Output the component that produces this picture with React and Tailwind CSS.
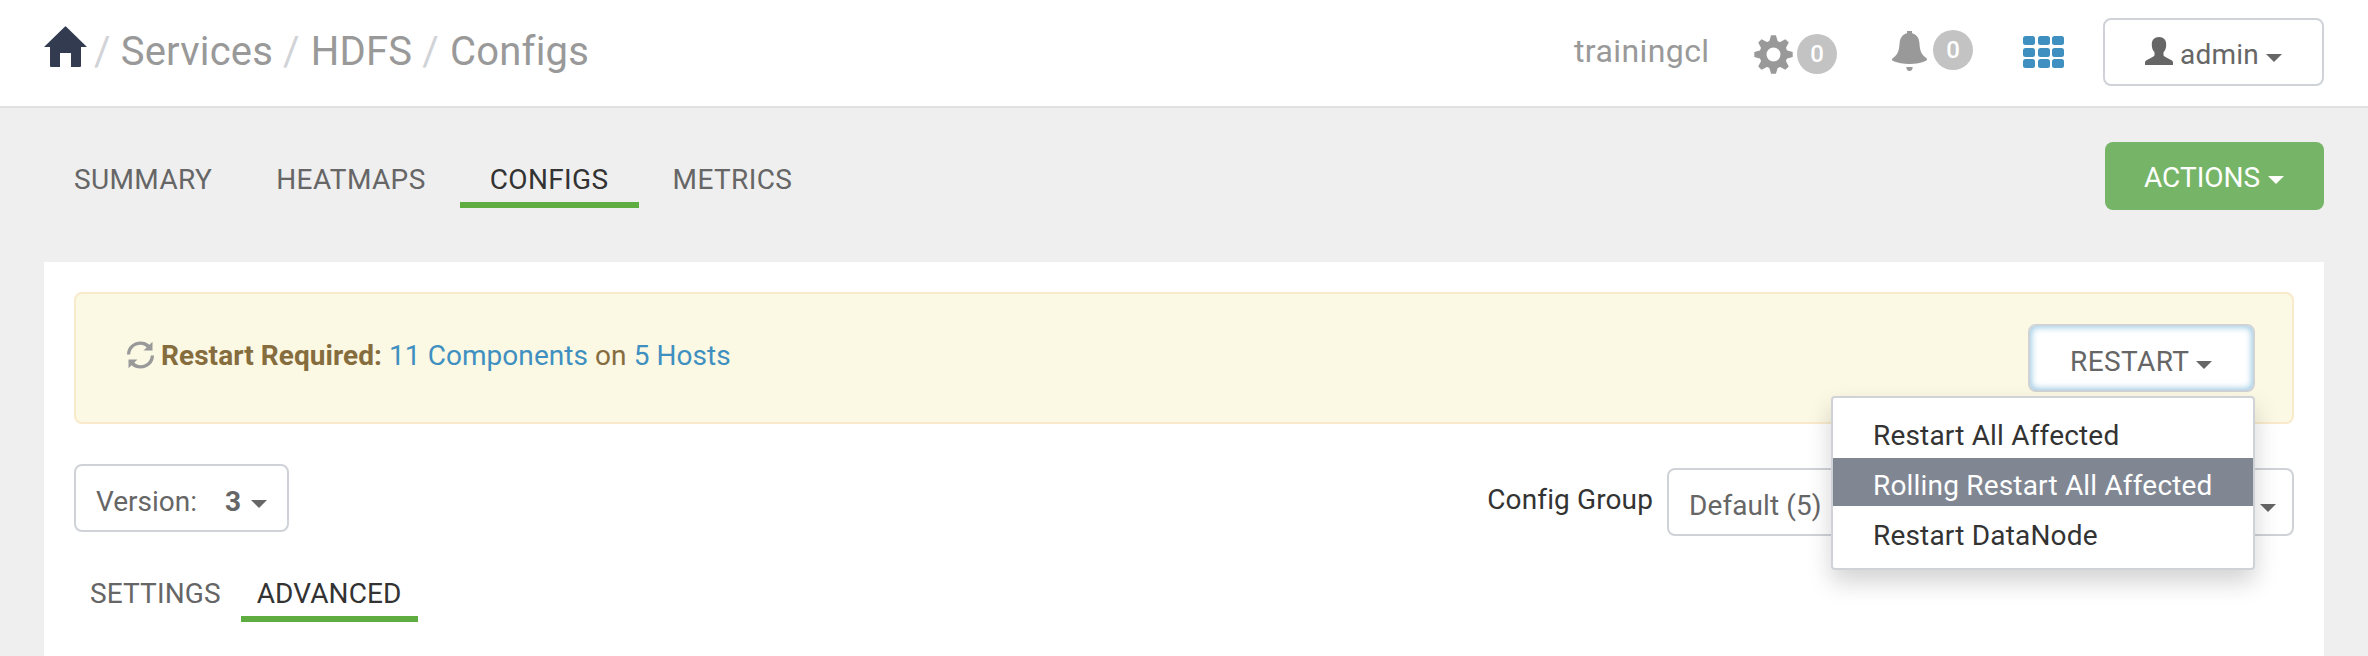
import React from "react";

const Caret = ({ className = "" }) => (
  <span
    className={`inline-block h-0 w-0 shrink-0 border-x-8 border-t-8 border-x-transparent border-t-current ${className}`}
  />
);

const HomeIcon = () => (
  <svg className="block h-[41px] w-[43px] shrink-0" viewBox="0 0 43 41" fill="#323b4f">
    <path d="M20.800.7a1 1 0 0 1 1.400 0L43 21h-6v19a1 1 0 0 1-1 1h-9V27H16v14H7a1 1 0 0 1-1-1V21H0z" />
  </svg>
);

const TEETH = [0, 45, 90, 135, 180, 225, 270, 315];

const CogIcon = () => (
  <svg className="block h-[39px] w-[39px] shrink-0" viewBox="-19.5 -19.5 39 39">
    <g fill="#999">
      {TEETH.map((a) => (
        <path key={a} transform={`rotate(${a})`} d="M-2.4-19.2h4.8L4.6-12h-9.2z" />
      ))}
    </g>
    <circle r="10.5" fill="none" stroke="#999" strokeWidth="7" />
  </svg>
);

const BellIcon = () => (
  <svg className="block h-[40px] w-[35px] shrink-0" viewBox="0 0 35 40" fill="#999">
    <path d="M15 0h5v2.200c4.500 1 7 4.500 7.400 9.500.5 8 1.600 11.500 7.200 15.500.8 1 .4 2-.6 2.500C29 32 24 33 17.500 33S6 32 1 30c-1-.5-1.400-1.500-.6-2.500C6 23.500 7.100 20 7.600 12 8 7 10.500 3.200 15 2.200z" />
    <path d="M14.300 36h6.400c0 2-1 4-3.200 4s-3.200-2-3.200-4z" />
  </svg>
);

const GridIcon = () => (
  <span className="grid grid-cols-3 gap-x-[2.500px] gap-y-[2.500px]">
    {Array.from({ length: 9 }, (_, i) => (
      <span key={i} className="h-[9px] w-[12px] rounded-[2.500px] bg-[#3f90c0]" />
    ))}
  </span>
);

const UserIcon = () => (
  <svg className="block h-[28px] w-[28px] shrink-0" viewBox="0 0 28 28" fill="#666">
    <path d="M14 0c4.500 0 7.200 2.800 7.200 7.500 0 3.500-.9 6-2.700 7.800v2.500c0 1 .5 1.500 1.500 2l6.500 3.500c1 .6 1.500 1.300 1.500 2.500V28H0v-2.200c0-1.200.5-1.900 1.500-2.500L8 19.800c1-.5 1.500-1 1.500-2v-2.500C7.700 13.500 6.800 11 6.800 7.500 6.800 2.800 9.500 0 14 0z" />
  </svg>
);

const REFRESH_ARC =
  "M0 13.500C0 6 6 .5 13.500.5c3.500 0 6.500 1.200 9 3.300L25.500.8V9.500h-9l3.200-3C18 4.800 16 3.800 13.500 3.800c-5.700 0-10 4.200-10.300 9.700z";

const RefreshIcon = () => (
  <svg className="block h-[28px] w-[27px] shrink-0" viewBox="0 0 27 28" fill="#999">
    <path d={REFRESH_ARC} />
    <path transform="rotate(180 13.500 14)" d={REFRESH_ARC} />
  </svg>
);

const Badge = () => (
  <span className="flex h-10 w-10 items-center justify-center rounded-full bg-[#c3c3c3] text-2xl font-medium text-white">0</span>
);

const Slash = ({ className }) => <span className={`text-[#d1d3d7] ${className}`}>/</span>;

const Tab = ({ active, className, children }) => (
  <span
    className={`flex h-[48px] items-start border-b-[6px] leading-10 ${
      active ? "border-[#5fad41] text-[#333]" : "border-transparent text-[#666]"
    } ${className}`}
  >
    {children}
  </span>
);

const Header = () => (
  <header className="flex h-[108px] items-start border-b-2 border-[#e1e1e1] bg-white pl-[44px] pr-[44px] text-[#999]">
    <div className="flex pt-[26px] text-[40px] leading-[52px] tracking-[0.2px]">
      <HomeIcon />
      <Slash className="ml-[7px]" />
      <span className="ml-[10px]">Services</span>
      <Slash className="ml-[10px]" />
      <span className="ml-[11px]">HDFS</span>
      <Slash className="ml-[10px]" />
      <span className="ml-[11px]">Configs</span>
    </div>
    <div className="ml-auto flex items-start">
      <span className="mt-[31px] w-[180px] text-[32px] leading-10 tracking-[0.4px]">trainingcl</span>
      <div className="flex w-[138px] gap-1 pt-[34px]">
        <span className="pt-px"><CogIcon /></span>
        <Badge />
      </div>
      <div className="flex w-[131px] gap-[6px] pt-[30px]">
        <span className="pt-px"><BellIcon /></span>
        <Badge />
      </div>
      <div className="w-20 pt-[36px]">
        <span className="block w-[41px]"><GridIcon /></span>
      </div>
      <button className="mt-[18px] flex h-[68px] w-[221px] items-center rounded-lg border-2 border-[#cfd3d7] bg-white pl-10 text-[28px] text-[#666]">
        <span className="-mt-[2px]"><UserIcon /></span>
        <span className="ml-[7px] mt-[6px] tracking-[0.2px]">admin</span>
        <Caret className="ml-[7px] mt-[12px]" />
      </button>
    </div>
  </header>
);

const RestartMenu = () => (
  <div className="absolute -right-[2px] top-[70px] z-10 flex h-[174px] w-[424px] flex-col gap-[2px] rounded border-2 border-[#cfd3d7] bg-white pt-[10px] text-left tracking-[0.18px] text-[#333] shadow-[0_12px_24px_rgba(0,0,0,0.175)]">
    <span className="h-12 pl-10 leading-[55px]">Restart All Affected</span>
    <span className="h-12 bg-[#808793] pl-10 leading-[55px] text-white">Rolling Restart All Affected</span>
    <span className="h-12 pl-10 leading-[55px]">Restart DataNode</span>
  </div>
);

const Alert = () => (
  <div className="flex h-[132px] items-start rounded-lg border-2 border-[#f9eacb] bg-[#fbf8e4] pl-[51px] pr-[37px] text-[#866d3e]">
    <span className="pt-[47px]"><RefreshIcon /></span>
    <p className="ml-[7px] mt-[42px] leading-10 tracking-[0.06px]">
      <b className="font-bold">Restart Required:</b> <a className="text-[#3f90c0]">11 Components</a> on{" "}
      <a className="text-[#3f90c0]">5 Hosts</a>
    </p>
    <div className="relative ml-auto mt-[30px] flex h-[68px] w-[227px] items-center rounded-lg border-2 border-[#cfd3d7] bg-white pl-10 text-[#666] shadow-[inset_0_0_7px_1px_#8fc4e2]">
      <span className="mt-[7px] tracking-[0.4px]">RESTART</span>
      <Caret className="ml-[7px] mt-[13px]" />
      <RestartMenu />
    </div>
  </div>
);

export default function App() {
  return (
    <div className="flex h-[656px] w-full flex-col overflow-hidden bg-[#efefef] font-['Roboto',sans-serif] text-[28px] leading-10 tracking-normal">
      <Header />
      <nav className="flex h-[154px] items-start gap-1 pl-[44px] pr-[44px] tracking-[0.38px]">
        <Tab className="mt-[52px] px-[30px]">SUMMARY</Tab>
        <Tab className="mt-[52px] px-[30px]">HEATMAPS</Tab>
        <Tab active className="mt-[52px] px-[30px]">CONFIGS</Tab>
        <Tab className="mt-[52px] px-[30px]">METRICS</Tab>
        <button className="ml-auto mt-[34px] flex h-[68px] w-[219px] items-center rounded-lg bg-[#76b568] pl-[39px] tracking-normal text-white">
          <span className="mt-[3px]">ACTIONS</span>
          <Caret className="ml-2 mt-[8px]" />
        </button>
      </nav>
      <main className="mx-[44px] flex-1 bg-white px-[30px] pt-[30px]">
        <Alert />
        <div className="flex items-start pt-10">
          <button className="flex h-[68px] w-[215px] items-center rounded-lg border-2 border-[#cfd3d7] pl-5 text-[#666]">
            <span className="mt-[7px]">Version:</span>
            <b className="ml-[28px] mt-[7px] font-bold">3</b>
            <Caret className="ml-[10px] mt-[12px]" />
          </button>
          <span className="ml-auto mt-[16px] tracking-[0.12px] text-[#333]">Config Group</span>
          <button className="ml-[14px] mt-1 flex h-[68px] w-[627px] items-center justify-between rounded-lg border-2 border-[#cfd3d7] pl-5 pr-4 tracking-[0.1px] text-[#666]">
            <span className="mt-[7px]">Default (5)</span>
            <Caret className="mt-[12px]" />
          </button>
        </div>
        <div className="flex items-start gap-1 pt-[38px] tracking-[0.12px]">
          <Tab className="px-4">SETTINGS</Tab>
          <Tab active className="px-4">ADVANCED</Tab>
        </div>
      </main>
    </div>
  );
}
